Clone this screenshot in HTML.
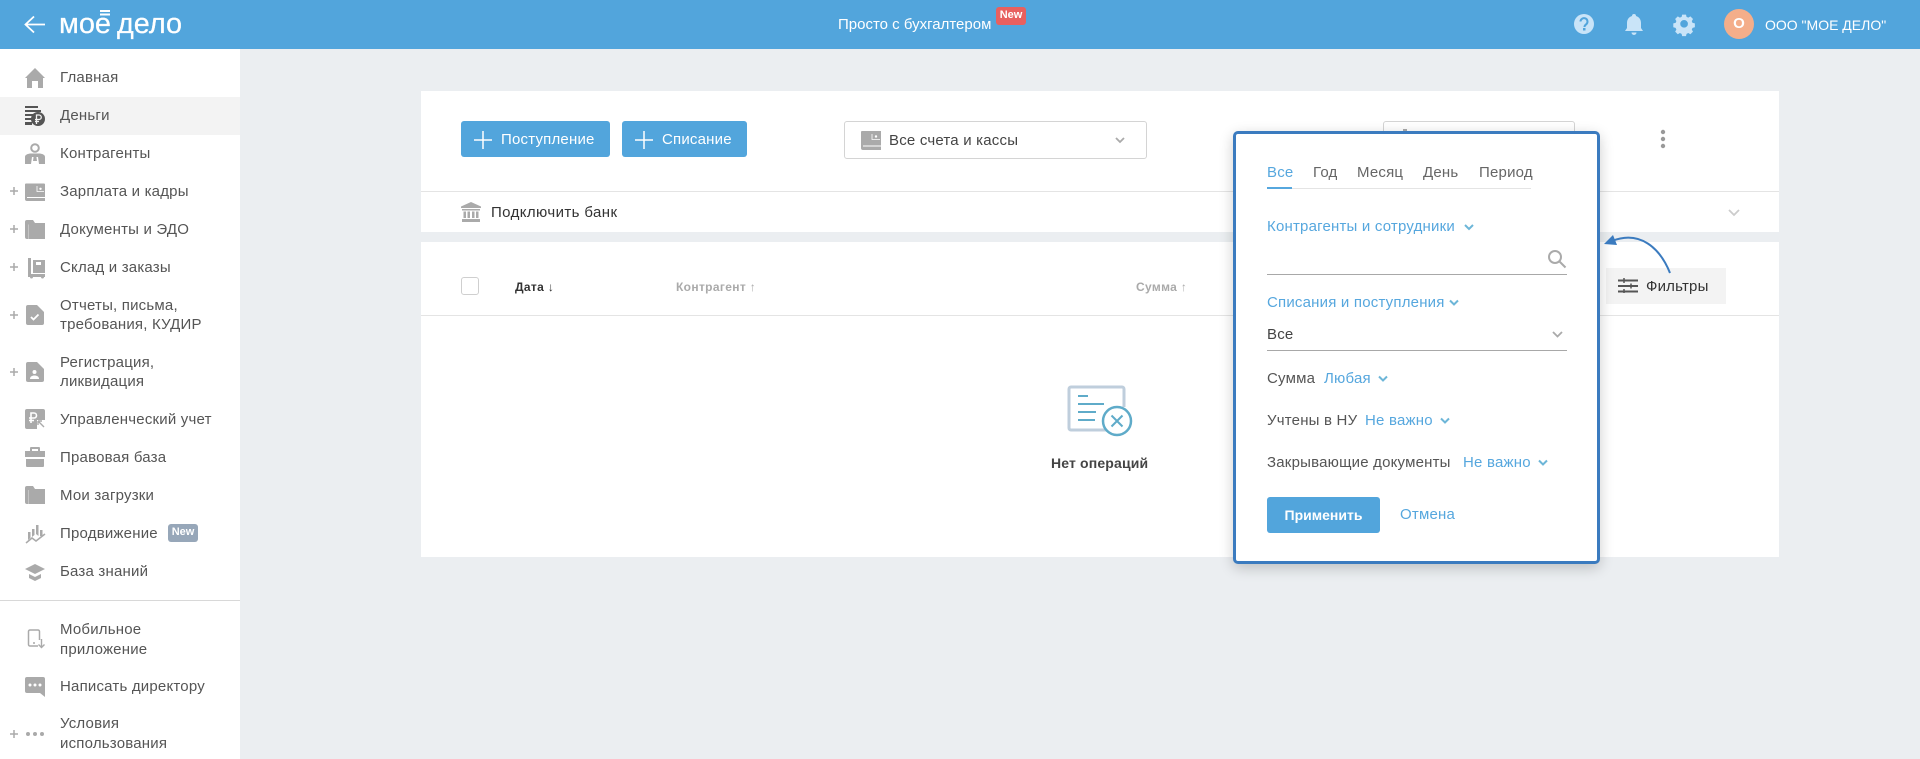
<!DOCTYPE html>
<html lang="ru"><head><meta charset="utf-8"><title>Деньги</title>
<style>
*{box-sizing:border-box}
html,body{margin:0;padding:0;width:1920px;height:759px;overflow:hidden;background:#ebeef1;font-family:"Liberation Sans",sans-serif;font-size:14px;color:#555}
.a{position:absolute}
.t{position:absolute;white-space:nowrap;height:20px;line-height:20px;letter-spacing:.2px;font-size:15px;margin-top:1px}
.h{font-size:12px;font-weight:bold;letter-spacing:.35px;color:#aaa;margin-top:0}
.l{color:#56a7de}
svg{position:absolute;overflow:visible}
.g{fill:#aaa}
</style></head><body>
<!-- header -->
<div class="a" style="left:0;top:0;width:1920px;height:49px;background:#52a5dc"></div>
<svg style="left:0;top:0" width="240" height="49" fill="none" stroke="#fff">
<path d="M45 24.500H26M34 16.500L25.500 24.500L34 32.500" stroke-width="1.800"/>
<path d="M100 11H110M100 14.500H110" stroke-width="2"/>
<text x="59" y="33" font-family="Liberation Sans" font-size="29" fill="#fff" stroke="#fff" stroke-width=".25" textLength="52" lengthAdjust="spacingAndGlyphs">мое</text>
<text x="117" y="33" font-family="Liberation Sans" font-size="29" fill="#fff" stroke="#fff" stroke-width=".25" textLength="65" lengthAdjust="spacingAndGlyphs">дело</text>
</svg>
<div class="t" style="left:838px;top:14px;color:#fff;letter-spacing:0">Просто с бухгалтером</div>
<div class="a" style="left:996px;top:7px;width:30px;height:18px;background:#e8605f;border-radius:3px;color:#fff;font-size:11px;font-weight:bold;line-height:17px;text-align:center">New</div>
<svg style="left:1570px;top:10px" width="130" height="30" fill="#c9e4f8">
<circle cx="14" cy="14" r="10"/>
<path d="M10.500 11.500a3.500 3.500 0 1 1 5.500 3c-1.200.8-1.500 1.200-1.500 2.500" fill="none" stroke="#52a5dc" stroke-width="2"/><rect x="13" y="18" width="2.500" height="2.500" fill="#52a5dc"/>
<path d="M64 4a2 2 0 0 1 2 2c3.500 1 5 4 5 7v5l2 3H55l2-3v-5c0-3 1.500-6 5-7a2 2 0 0 1 2-2zM61.500 22.500h5a2.500 2.500 0 0 1-5 0z"/>
<path fill-rule="evenodd" transform="translate(26.300,1.500) scale(.77)" d="M111.500 4h5l.7 3 2.300 1 2.700-1.600 3.400 3.400-1.600 2.700 1 2.300 3 .7v5l-3 .7-1 2.300 1.600 2.700-3.400 3.400-2.700-1.600-2.300 1-.7 3h-5l-.7-3-2.300-1-2.700 1.600-3.400-3.400 1.600-2.700-1-2.300-3-.7v-5l3-.7 1-2.300-1.600-2.700 3.400-3.400 2.700 1.600 2.300-1zM114 11a5 5 0 1 0 0 10 5 5 0 0 0 0-10z"/>
</svg>
<div class="a" style="left:1724px;top:9px;width:30px;height:30px;border-radius:50%;background:#f4ae8a;color:#fff;font-weight:bold;font-size:15px;line-height:30px;text-align:center">О</div>
<div class="t" style="left:1765px;top:14px;color:#fff;letter-spacing:0;font-size:14px">ООО "МОЕ ДЕЛО"</div>

<!-- sidebar -->
<div class="a" style="left:0;top:49px;width:240px;height:710px;background:#fff"></div>
<div class="a" style="left:0;top:97px;width:240px;height:38px;background:#f3f3f3"></div>
<div class="a" style="left:0;top:600px;width:240px;height:1px;background:#d8d8d8"></div>
<div class="t" style="left:60px;top:67px">Главная</div>
<div class="t" style="left:60px;top:105px">Деньги</div>
<div class="t" style="left:60px;top:143px">Контрагенты</div>
<div class="t" style="left:60px;top:181px">Зарплата и кадры</div>
<div class="t" style="left:60px;top:219px">Документы и ЭДО</div>
<div class="t" style="left:60px;top:257px">Склад и заказы</div>
<div class="t" style="left:60px;top:295px">Отчеты, письма,</div>
<div class="t" style="left:60px;top:314px">требования, КУДИР</div>
<div class="t" style="left:60px;top:352px">Регистрация,</div>
<div class="t" style="left:60px;top:371px">ликвидация</div>
<div class="t" style="left:60px;top:409px">Управленческий учет</div>
<div class="t" style="left:60px;top:447px">Правовая база</div>
<div class="t" style="left:60px;top:485px">Мои загрузки</div>
<div class="t" style="left:60px;top:523px">Продвижение</div>
<div class="a" style="left:168px;top:524px;width:30px;height:18px;background:#97a7b9;border-radius:3px;color:#fff;font-size:11px;font-weight:bold;line-height:17px;text-align:center">New</div>
<div class="t" style="left:60px;top:561px">База знаний</div>
<div class="t" style="left:60px;top:619px">Мобильное</div>
<div class="t" style="left:60px;top:639px">приложение</div>
<div class="t" style="left:60px;top:676px">Написать директору</div>
<div class="t" style="left:60px;top:713px">Условия</div>
<div class="t" style="left:60px;top:733px">использования</div>
<svg style="left:0;top:0" width="60" height="759" class="g">
<!-- plus -->
<path d="M10 191h8M14 187v8M10 229h8M14 225v8M10 267h8M14 263v8M10 315h8M14 311v8M10 372h8M14 368v8M10 734h8M14 730v8" stroke="#aaa" stroke-width="1.500" fill="none"/>
<!-- home -->
<path d="M35 68L45 78H43V88H38V81H32V88H27V78H25Z"/>
<!-- money -->
<g fill="#555"><rect x="25" y="106" width="13" height="2"/><rect x="25" y="110" width="16" height="2"/><rect x="25" y="114" width="10" height="2"/><rect x="25" y="118" width="7" height="2"/><rect x="25" y="122" width="7" height="3"/><circle cx="38" cy="119" r="7"/></g>
<path d="M36.500 124v-9h2.500a2 2 0 0 1 0 4.500h-4M35 121.500h4" stroke="#f3f3f3" stroke-width="1.300" fill="none"/>
<!-- contractors -->
<circle cx="35" cy="148" r="3.800" fill="none" stroke="#aaa" stroke-width="2"/>
<path d="M25 164V157c0-2 2-3 5-3.500h10c3 .5 5 1.500 5 3.500v7H39l-1-7h-6l-1 7zM34 154h2l1 7h-4z"/>
<!-- wallet -->
<path d="M26 183.500H44c.6 0 1 .4 1 1V201H27a2 2 0 0 1-2-2V184.500c0-.6.4-1 1-1z"/>
<path d="M27 197.500H45" stroke="#fff" stroke-width="1" fill="none"/>
<path d="M37 186v5.500h7" stroke="#fff" stroke-width=".8" fill="none"/><circle cx="40.500" cy="188.800" r="1.200" fill="#fff"/>
<!-- folder -->
<path d="M25 222a2 2 0 0 1 2-2h6l2 3h10v16H27a2 2 0 0 1-2-2z"/>
<path d="M28.500 224.500V239" stroke="#fff" stroke-opacity=".4" stroke-width=".8" fill="none"/>
<!-- warehouse -->
<path d="M28 258h3v16h14v3h-1a1.500 1.500 0 0 1-3 0h-8a1.500 1.500 0 0 1-3 0h-2z"/><path d="M33 260h12v13H33z"/><rect x="36" y="262" width="5" height="3" fill="#fff"/>
<!-- report -->
<path d="M28 305h9l7 7v11a2 2 0 0 1-2 2H28a2 2 0 0 1-2-2V307a2 2 0 0 1 2-2z"/><path d="M31 317l2.500 2.500 5-5" stroke="#fff" stroke-width="1.800" fill="none"/>
<!-- registration -->
<path d="M28 362h9l7 7v11a2 2 0 0 1-2 2H28a2 2 0 0 1-2-2V364a2 2 0 0 1 2-2z"/><circle cx="34.500" cy="372" r="2" fill="#fff"/><path d="M30 379c0-2.500 2-3.500 4.500-3.500s4.500 1 4.500 3.500z" fill="#fff"/>
<!-- mgmt -->
<rect x="25" y="409" width="20" height="20" rx="2"/>
<path d="M31 423v-10h3a2.500 2.500 0 0 1 0 5h-5M29 420.500h5" stroke="#fff" stroke-width="1.600" fill="none"/>
<path d="M37 420h8v9h-8z" fill="#fff"/><path d="M38 421l6 6M38 421h4M38 421v4" stroke="#aaa" stroke-width="1.400" fill="none"/>
<!-- briefcase -->
<path fill-rule="evenodd" d="M31 447h8a1 1 0 0 1 1 1v3h5v6H25v-6h5v-3a1 1 0 0 1 1-1zM32 449v2h6v-2zM26 459h18v7a1 1 0 0 1-1 1H27a1 1 0 0 1-1-1z"/>
<!-- downloads -->
<path d="M25 488a2 2 0 0 1 2-2h6l2 3h10v15H27a2 2 0 0 1-2-2z"/>
<path d="M28.500 490V504" stroke="#fff" stroke-opacity=".4" stroke-width=".8" fill="none"/>
<!-- promo -->
<path d="M28 532h2.500v6L28 540zM32 529h2.500v6l-2.500 2zM36 525h2.500v11l-2.500-2zM40 530h2.500v6.500l-2.500-.5z"/><path d="M26 543l6-5 4 3 9-7" fill="none" stroke="#aaa" stroke-width="1.500"/>
<!-- cap -->
<path d="M35 564l10 5-10 5-10-5zM29 574l6 3 6-3v4l-6 3-6-3z"/>
<!-- phone -->
<path d="M38 646h-8a1.500 1.500 0 0 1-1.500-1.500v-13a1.500 1.500 0 0 1 1.500-1.500h8a1.500 1.500 0 0 1 1.500 1.500V640" fill="none" stroke="#aaa" stroke-width="1.500"/><path d="M41.500 639v8M38.500 644.500l3 3 3-3" fill="none" stroke="#aaa" stroke-width="1.400"/><circle cx="34" cy="643" r="1"/>
<!-- bubble -->
<path d="M27 677H43a2 2 0 0 1 2 2V697l-5-4H27a2 2 0 0 1-2-2V679a2 2 0 0 1 2-2z"/><circle cx="30" cy="685" r="1.500" fill="#fff"/><circle cx="35" cy="685" r="1.500" fill="#fff"/><circle cx="40" cy="685" r="1.500" fill="#fff"/>
<!-- dots -->
<circle cx="28" cy="734" r="2"/><circle cx="35" cy="734" r="2"/><circle cx="42" cy="734" r="2"/>
</svg>

<!-- main card -->
<div class="a" style="left:421px;top:91px;width:1358px;height:141px;background:#fff"></div>
<div class="a" style="left:421px;top:191px;width:1358px;height:1px;background:#e4e4e4"></div>
<div class="a" style="left:421px;top:242px;width:1358px;height:315px;background:#fff"></div>
<div class="a" style="left:421px;top:315px;width:1358px;height:1px;background:#e4e4e4"></div>

<div class="a" style="left:461px;top:121px;width:149px;height:36px;background:#52a5dc;border-radius:3px"></div>
<div class="a" style="left:622px;top:121px;width:125px;height:36px;background:#52a5dc;border-radius:3px"></div>
<svg style="left:470px;top:125px" width="190" height="30" stroke="#fff" stroke-width="1.500" fill="none"><path d="M4 15H22M13 6V24M165 15H183M174 6V24"/></svg>
<div class="t" style="left:501px;top:129px;color:#fff">Поступление</div>
<div class="t" style="left:662px;top:129px;color:#fff">Списание</div>

<div class="a" style="left:844px;top:121px;width:303px;height:38px;border:1px solid #d4d4d4;border-radius:3px;background:#fff"></div>
<svg style="left:861px;top:131px" width="20" height="19" class="g"><path d="M1 0H20V19H2a2 2 0 0 1-2-2V1a1 1 0 0 1 1-1z"/><path d="M2 15H20" stroke="#fff" fill="none"/><path d="M11 3v5.500h8" stroke="#fff" stroke-width=".8" fill="none"/><circle cx="15" cy="5.500" r="1.200" fill="#fff"/></svg>
<div class="t" style="left:889px;top:130px;color:#444">Все счета и кассы</div>
<svg style="left:1115px;top:137px" width="10" height="6" fill="none" stroke="#aaa" stroke-width="1.800"><path d="M1 1l4 4 4-4"/></svg>

<div class="a" style="left:1383px;top:121px;width:192px;height:38px;border:1px solid #d4d4d4;border-radius:3px;background:#fff"></div>
<div class="a" style="left:1403px;top:129px;width:4px;height:6px;background:#aaa"></div>
<svg style="left:1658px;top:128px" width="10" height="22" fill="#999"><circle cx="5" cy="4" r="2.200"/><circle cx="5" cy="11" r="2.200"/><circle cx="5" cy="18" r="2.200"/></svg>

<svg style="left:461px;top:202px" width="20" height="20" class="g"><path d="M10 0L20 4.500V6H0V4.500zM1 7h18v1.500H1zM2.500 9.500H5V16H2.500zM6.500 9.500H9V16H6.500zM11 9.500h2.500V16H11zM15 9.500h2.500V16H15zM1 17h18v3H1z"/></svg>
<div class="t" style="left:491px;top:202px;color:#333;letter-spacing:.4px">Подключить банк</div>
<svg style="left:1728px;top:209px" width="12" height="8" fill="none" stroke="#ccc" stroke-width="1.800"><path d="M1 1l5 5 5-5"/></svg>

<div class="a" style="left:461px;top:277px;width:18px;height:18px;border:1px solid #cfcfcf;border-radius:3px"></div>
<div class="t h" style="left:515px;top:277px;color:#333">Дата ↓</div>
<div class="t h" style="left:676px;top:277px">Контрагент ↑</div>
<div class="t h" style="left:1136px;top:277px">Сумма ↑</div>

<svg style="left:1066px;top:384px" width="70" height="62" fill="none">
<path d="M41 46H5a2 2 0 0 1-2-2V5a2 2 0 0 1 2-2H56a2 2 0 0 1 2 2V23" stroke="#bfcedc" stroke-width="3"/>
<path d="M12 12H22M12 20H38M12 28H30M12 36H29" stroke="#5fabc9" stroke-width="2"/>
<circle cx="51" cy="37" r="14" stroke="#5fabc9" stroke-width="2.500" fill="#fff"/>
<path d="M45.500 31.500l11 11M56.500 31.500l-11 11" stroke="#5fabc9" stroke-width="2"/>
</svg>
<div class="t" style="left:1051px;top:453px;margin-top:0;font-size:14px;font-weight:bold;color:#444;letter-spacing:.15px">Нет операций</div>

<!-- filters button -->
<div class="a" style="left:1606px;top:268px;width:120px;height:36px;background:#f3f3f3"></div>
<svg style="left:1618px;top:278px" width="20" height="15" fill="none" stroke="#555" stroke-width="2"><path d="M0 2.500H20M0 8H20M0 13.500H20"/><path d="M6 0V5M13 5.500V10.500M6 11V15" stroke-width="1.500"/></svg>
<div class="t" style="left:1646px;top:276px;color:#333">Фильтры</div>

<!-- popup -->
<div class="a" style="left:1233px;top:131px;width:367px;height:433px;background:#fff;border:3px solid #3b7bbf;border-radius:5px;box-shadow:0 4px 14px rgba(0,0,0,.2)"></div>
<div class="t l" style="left:1267px;top:162px">Все</div>
<div class="t" style="left:1313px;top:162px;color:#666">Год</div>
<div class="t" style="left:1357px;top:162px;color:#666">Месяц</div>
<div class="t" style="left:1423px;top:162px;color:#666">День</div>
<div class="t" style="left:1479px;top:162px;color:#666">Период</div>
<div class="a" style="left:1267px;top:188px;width:264px;height:1px;background:#e4e4e4"></div>
<div class="a" style="left:1267px;top:187px;width:25px;height:2px;background:#56a7de"></div>
<div class="t l" style="left:1267px;top:216px">Контрагенты и сотрудники</div>
<div class="a" style="left:1267px;top:274px;width:300px;height:1px;background:#a8a8a8"></div>
<svg style="left:1548px;top:250px" width="18" height="18" fill="none" stroke="#aaa" stroke-width="2"><circle cx="7" cy="7" r="6"/><path d="M11.500 11.500l6 6"/></svg>
<div class="t l" style="left:1267px;top:292px">Списания и поступления</div>
<div class="t" style="left:1267px;top:324px;color:#444">Все</div>
<div class="a" style="left:1267px;top:350px;width:300px;height:1px;background:#a8a8a8"></div>
<div class="t" style="left:1267px;top:368px;color:#555">Сумма</div>
<div class="t l" style="left:1324px;top:368px">Любая</div>
<div class="t" style="left:1267px;top:410px;color:#555">Учтены в НУ</div>
<div class="t l" style="left:1365px;top:410px">Не важно</div>
<div class="t" style="left:1267px;top:452px;color:#555">Закрывающие документы</div>
<div class="t l" style="left:1463px;top:452px">Не важно</div>
<div class="a" style="left:1267px;top:497px;width:113px;height:36px;background:#52a5dc;border-radius:3px;color:#fff;font-weight:bold;line-height:36px;text-align:center">Применить</div>
<div class="t l" style="left:1400px;top:504px">Отмена</div>
<svg style="left:0;top:0" width="1920" height="759" fill="none">
<g stroke="#6db6d8" stroke-width="2"><path d="M1465 225l4 4 4-4M1450 300.500l4 4 4-4M1379 376.500l4 4 4-4M1441 418.500l4 4 4-4M1539 460.500l4 4 4-4"/></g>
<path d="M1553 332l4.500 4.500 4.500-4.500" stroke="#aaa" stroke-width="1.800"/>
<path d="M1670 273C1660 248 1640 230 1612 241" stroke="#3b7bbf" stroke-width="2"/>
<path d="M1604 244L1613 235L1617 245Z" fill="#3b7bbf"/>
</svg>
</body></html>
